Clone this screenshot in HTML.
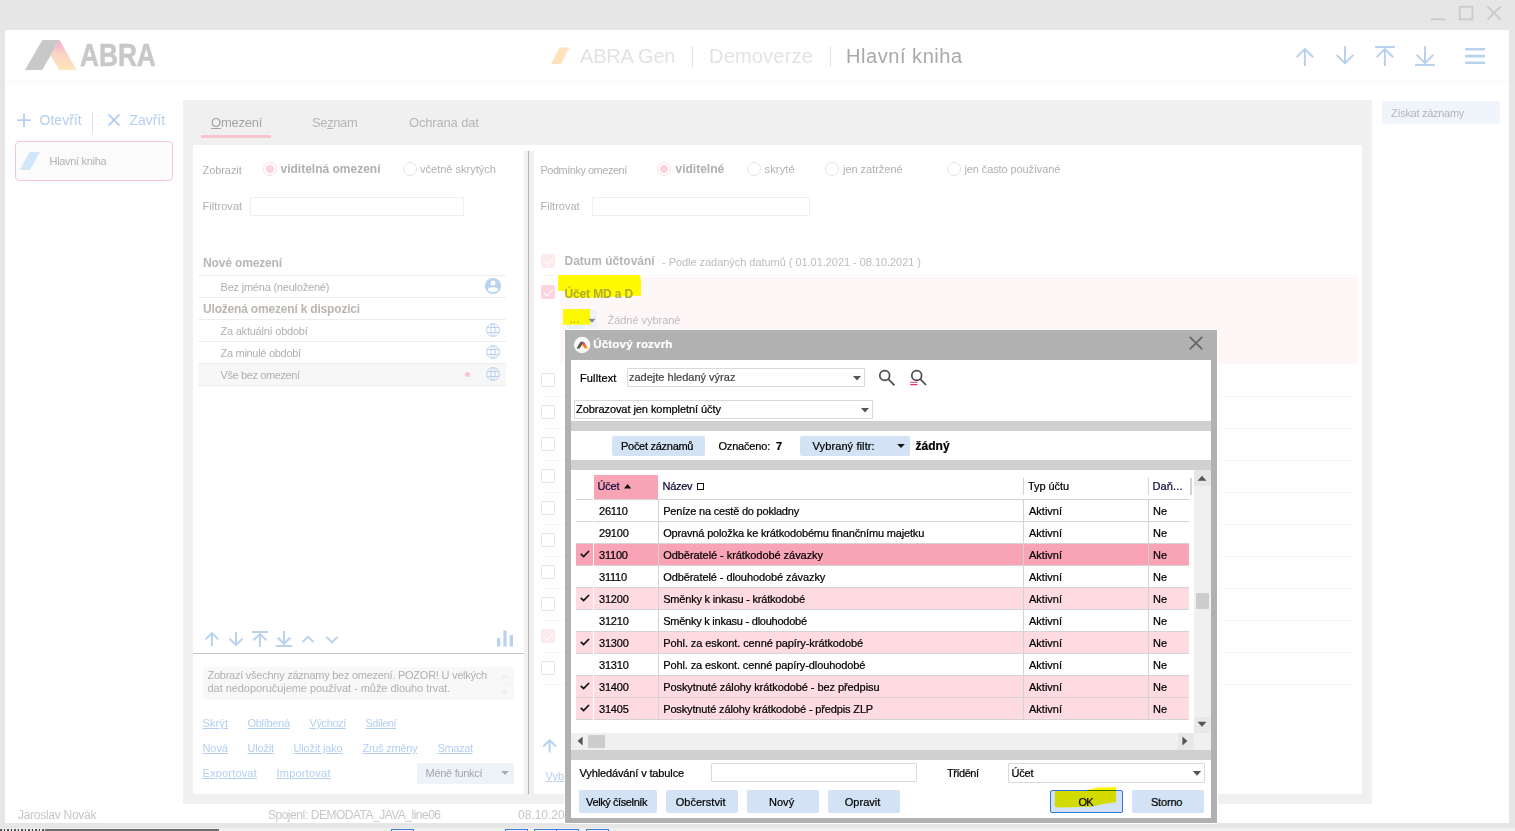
<!DOCTYPE html>
<html lang="cs">
<head>
<meta charset="utf-8">
<title>ABRA Gen - Hlavní kniha</title>
<style>
*{box-sizing:border-box;margin:0;padding:0}
html,body{width:1515px;height:831px;overflow:hidden}
body{background:#e6e6e6;font-family:"Liberation Sans",sans-serif;font-size:11px;color:#000;position:relative}
.abs,.abs *{position:absolute}
.t{position:absolute;white-space:nowrap;line-height:14px}
#win{position:absolute;left:5px;top:30px;width:1504px;height:793px;background:#fff}

.lk{color:#b3cff0;text-decoration:underline;font-size:11px}
.g{color:#b0b0b0}
.rad{position:absolute;width:14px;height:14px;border-radius:50%;border:1px solid #e4e4e4;background:#fff}
.rad.on{border-color:#fddde3;background:radial-gradient(circle,#fdd3db 0,#fdd3db 3.7px,#fff 4.5px)}
.cb{position:absolute;left:541px;width:14px;height:14px;border:1px solid #e6e6e6;border-radius:2px;background:#fff}
.cb.on{border:none;background:#fdeaed}
.cb.on2{border:none;background:#fcd4db}
.hl{position:absolute;height:1px;background:#ededed}
.rl{position:absolute;left:540px;width:816px;height:1px;background:#f6f6f6}

.cb.on::after,.cb.on2::after{content:"";position:absolute;left:4.5px;top:1.5px;width:4px;height:8px;border:solid #fff;border-width:0 1.6px 1.6px 0;transform:rotate(42deg)}
#dlg{position:absolute;left:565px;top:330px;width:652px;height:493px;background:#b1b1b1;box-shadow:0 0 0 1px rgba(255,255,255,0.85)}
#dlg .in{position:absolute;left:6px;top:30px;width:640px;height:458px;background:#fff}
.d{position:absolute;white-space:nowrap;line-height:14px;font-size:11px;color:#000}
.bar{position:absolute;left:571px;width:640px;background:#d0d0d0}
.btn{position:absolute;background:#d3e3f5;border-radius:2px;height:23px;top:790px;font-size:11px;line-height:24px;text-align:center;white-space:nowrap;padding-right:2.800px}
.inp{position:absolute;border:1px solid #d9d9d9;background:#fff;border-radius:1px}
.gr{position:absolute;left:576px;width:613px;height:22px}
.gr i{position:absolute;top:0;height:21px;font-style:normal;white-space:nowrap;line-height:23px;padding-left:5px;overflow:hidden}
.gr.m i{background:#fddbe0}
.gr.s i{background:#f8a4b4}
.gr .c0{left:0;width:17px}
.gr .c1{left:18px;width:64px;letter-spacing:-0.200px}
.gr .c2{left:83px;width:364px;padding-left:4.200px}
.gr .c3{left:448px;width:124px}
.gr .c4{left:573px;width:40px;padding-left:4px}
.gl{position:absolute;background:#d4d4d4}
.d,.gr,.btn{-webkit-text-stroke:0.22px currentColor}
</style>






<style id="fitcss">
#h1{letter-spacing:-0.177px !important}
#h2{letter-spacing:0.193px !important}
#h3{letter-spacing:0.553px !important}
#sb1{letter-spacing:0.041px !important}
#sb2{letter-spacing:-0.047px !important}
#sb3{letter-spacing:-0.304px !important}
#tb1{letter-spacing:-0.238px !important}
#tb2{letter-spacing:-0.384px !important}
#tb3{letter-spacing:-0.168px !important}
#l1{letter-spacing:-0.069px !important}
#l2{letter-spacing:-0.002px !important}
#l3{letter-spacing:0.013px !important}
#l4{letter-spacing:0.064px !important}
#l5{letter-spacing:-0.142px !important}
#l6{letter-spacing:-0.211px !important}
#l7{letter-spacing:-0.187px !important}
#l8{letter-spacing:-0.224px !important}
#d1{letter-spacing:-0.255px !important}
#k1{letter-spacing:0.107px !important}
#k2{letter-spacing:-0.307px !important}
#k3{letter-spacing:-0.392px !important}
#k4{letter-spacing:-0.55px !important}
#k5{letter-spacing:-0.072px !important}
#k6{letter-spacing:-0.186px !important}
#k7{letter-spacing:-0.15px !important}
#k8{letter-spacing:-0.257px !important}
#k9{letter-spacing:-0.366px !important}
#k10{letter-spacing:0.181px !important}
#k11{letter-spacing:0.223px !important}
#mf{letter-spacing:-0.284px !important}
#r1{letter-spacing:-0.497px !important}
#r2{letter-spacing:0.001px !important}
#r3{letter-spacing:0.159px !important}
#r4{letter-spacing:-0.028px !important}
#r5{letter-spacing:-0.108px !important}
#r7{letter-spacing:0.013px !important}
#r8{letter-spacing:-0.042px !important}
#r9{letter-spacing:-0.138px !important}
#r11{letter-spacing:-0.038px !important}
#st2{letter-spacing:-0.507px !important}
#zz{letter-spacing:-0.288px !important}
#l9{letter-spacing:-0.294px !important}
#l10{letter-spacing:-0.387px !important}
#d2{letter-spacing:-0.05px !important}
#dt{letter-spacing:0.209px !important}
#d_ft{letter-spacing:0.129px !important}
#d_ph{letter-spacing:-0.0px !important}
#d_zk{letter-spacing:-0.06px !important}
#d_pz{letter-spacing:-0.279px !important}
#d_oz{letter-spacing:-0.189px !important}
#d_vf{letter-spacing:0.112px !important}
#d_za{letter-spacing:0.037px !important}
#g_h1{letter-spacing:-0.206px !important}
#g_h2{letter-spacing:-0.298px !important}
#g_h3{letter-spacing:-0.072px !important}
#g_h4{letter-spacing:0.14px !important}
#d_vt{letter-spacing:-0.129px !important}
#d_tr{letter-spacing:-0.466px !important}
#d_uc{letter-spacing:-0.206px !important}
#b1{letter-spacing:-0.403px !important}
#b2{letter-spacing:0.038px !important}
#b3{letter-spacing:0.059px !important}
#b4{letter-spacing:0.019px !important}
#b5{letter-spacing:-0.953px !important}
#b6{letter-spacing:-0.17px !important}
#n0{letter-spacing:-0.202px !important}
#n1{letter-spacing:-0.161px !important}
#n2{letter-spacing:-0.052px !important}
#n3{letter-spacing:-0.077px !important}
#n4{letter-spacing:-0.199px !important}
#n5{letter-spacing:-0.241px !important}
#n6{letter-spacing:-0.08px !important}
#n7{letter-spacing:-0.1px !important}
#n8{letter-spacing:-0.075px !important}
#n9{letter-spacing:-0.142px !important}
#st1{letter-spacing:-0.274px !important}
</style>
</head>
<body>
<!-- window controls -->
<svg class="t" style="left:1425px;top:0;width:90px;height:30px" viewBox="0 0 90 30">
 <g stroke="#cbcbcb" stroke-width="1.9" fill="none">
  <path d="M6 19.2H20"/>
  <rect x="34.8" y="6.8" width="12.6" height="12.6"/>
  <path d="M62.5 6.5L75.5 19.5M75.5 6.5L62.5 19.5"/>
 </g>
</svg>
<div id="win"></div>
<!--HEADER-->
<svg class="t" style="left:20px;top:36px;width:60px;height:38px" viewBox="0 0 60 38">
 <defs><linearGradient id="lg1" x1="0" y1="0" x2="0" y2="1"><stop offset="0" stop-color="#f6a8d2"/><stop offset="0.45" stop-color="#fbd3c4"/><stop offset="1" stop-color="#ffe6b8"/></linearGradient></defs>
 <polygon points="5,34 22.3,4 39.5,4 22.2,34" fill="#c8c8c8"/>
 <polygon points="39.5,4 56.5,34 39.2,34 30.6,19.4" fill="url(#lg1)"/>
</svg>
<div class="t" style="left:79.5px;top:37.5px;font-size:30.5px;line-height:34px;font-weight:bold;color:#c8c8c8;-webkit-text-stroke:0.5px #c8c8c8;transform:scaleX(0.86);transform-origin:0 0">ABRA</div>
<svg class="t" style="left:548px;top:44px;width:26px;height:24px" viewBox="0 0 26 24">
 <polygon points="3,20 11.5,3.5 21.5,3.5 13,20" fill="#fde2bd"/>
</svg>
<div class="t" style="left:580px;top:44px;font-size:20px;line-height:24px;color:#e3e3e3" id="h1">ABRA Gen</div>
<div class="t" style="left:692px;top:46px;width:1px;height:21px;background:#e2e2e2"></div>
<div class="t" style="left:709px;top:44px;font-size:20px;line-height:24px;color:#e3e3e3" id="h2">Demoverze</div>
<div class="t" style="left:830px;top:46px;width:1px;height:21px;background:#e2e2e2"></div>
<div class="t" style="left:846px;top:44px;font-size:20px;line-height:24px;color:#a9a9a9" id="h3">Hlavní kniha</div>
<div class="t" style="left:5px;top:80px;width:1504px;height:8px;background:linear-gradient(#fafafa,#fdfdfd 40%,#fff)"></div>
<svg class="t" style="left:1290px;top:40px;width:210px;height:34px" viewBox="0 0 210 34">
 <g stroke="#b9d3ef" stroke-width="2" fill="none">
  <path d="M14.900 25.900V8.900M6.700 17.200L14.900 9L23.100 17.200"/>
  <path d="M55 6.200V23.300M46.600 14.900L55 23.300L63.400 14.900"/>
  <path d="M85.200 7H104.900M94.900 25.900V8.400M86.700 17.200L94.900 9L103.100 17.200"/>
  <path d="M125.100 25.100H144.900M135 6.200V23.600M126.600 14.700L135 23.100L143.400 14.700"/>
 </g>
 <g stroke="#b9d3ef" stroke-width="2.600" fill="none">
  <path d="M175.100 9.300H195M175.100 16.100H195M175.100 22.700H195"/>
 </g>
</svg>
<!--SIDEBAR-->
<svg class="t" style="left:14px;top:108px;width:110px;height:26px" viewBox="0 0 110 26">
 <g stroke="#b5d0ee" stroke-width="1.8" fill="none">
  <path d="M10 5.5V19M3.2 12.2H16.8"/>
  <path d="M94.5 6.5L105.5 17.5M105.5 6.5L94.5 17.5"/>
 </g>
 <path d="M78.5 4V25" stroke="#d5e3f4" stroke-width="1"/>
</svg>
<div class="t" id="sb1" style="left:39.5px;top:111px;font-size:14px;line-height:18px;color:#b5d0ee;letter-spacing:0.5px">Otevřít</div>
<div class="t" id="sb2" style="left:129.5px;top:111px;font-size:14px;line-height:18px;color:#b5d0ee;letter-spacing:0.5px">Zavřít</div>
<div class="t" style="left:15px;top:141px;width:158px;height:40px;border:1px solid #fac6d0;border-radius:4px;background:#fbfbfb"></div>
<svg class="t" style="left:18px;top:150px;width:24px;height:22px" viewBox="0 0 24 22">
 <polygon points="2,20 11.5,2 22,2 12,20" fill="#d2e6fa"/>
</svg>
<div class="t g" id="sb3" style="left:49.5px;top:154px;color:#b2b2b8">Hlavní kniha</div>
<div class="t" id="st1" style="left:18px;top:807px;font-size:12px;line-height:16px;color:#c6c6c6">Jaroslav Novák</div>
<div class="t" id="st2" style="left:268px;top:807px;font-size:12px;line-height:16px;color:#c6c6c6">Spojení: DEMODATA_JAVA_line06</div>
<div class="t" id="st3" style="left:518px;top:807px;font-size:12px;line-height:16px;color:#c6c6c6">08.10.2021</div>
<!--MAIN-->
<div class="t" style="left:183px;top:100px;width:1189px;height:704px;background:#f0f0f0"></div>
<div class="t" style="left:193px;top:145px;width:1169px;height:649px;background:#fff"></div>
<div class="t" style="left:524px;top:151px;width:10px;height:643px;background:#f0f0f0"></div>
<div class="t" style="left:528px;top:151px;width:1px;height:643px;background:#b4b4b4"></div>
<div class="t" style="left:1382px;top:101px;width:118px;height:23px;background:#f0f5fc;border-radius:2px"></div>
<div class="t g" id="zz" style="left:1391px;top:106px;color:#b8b4b4">Získat záznamy</div>
<!-- tabs -->
<div class="t" id="tb1" style="margin-top:1px;left:211px;top:114px;font-size:13px;line-height:16px;color:#a4a4a4"><u>O</u>mezení</div>
<div class="t" style="left:201px;top:135px;width:70px;height:3px;background:#fac5cf"></div>
<div class="t" id="tb2" style="margin-top:1px;left:312px;top:114px;font-size:13px;line-height:16px;color:#b6b6b6">Se<u>z</u>nam</div>
<div class="t" id="tb3" style="margin-top:1px;left:409px;top:114px;font-size:13px;line-height:16px;color:#b6b6b6">Ochrana dat</div>
<!-- left panel -->
<div class="t g" id="l1" style="left:202.5px;top:163px">Zobrazit</div>
<div class="rad on" style="left:263px;top:162px"></div>
<div class="t g" id="l2" style="left:280.5px;top:162px;font-weight:bold;font-size:12px">viditelná omezení</div>
<div class="rad" style="left:403px;top:162px"></div>
<div class="t g" id="l3" style="left:420px;top:162px;">včetně skrytých</div>
<div class="t g" id="l4" style="left:202.5px;top:199px">Filtrovat</div>
<div class="t" style="left:250px;top:197px;width:214px;height:19px;border:1px solid #efefef;background:#fff"></div>
<div class="t" id="l5" style="left:203px;top:256px;font-weight:bold;font-size:12px;color:#bab6b2">Nové omezení</div>
<div class="hl" style="left:198px;top:275px;width:308px"></div>
<div class="t g" id="l6" style="left:220.5px;top:280px">Bez jména (neuložené)</div>
<svg class="t" style="left:484px;top:277px;width:18px;height:18px" viewBox="0 0 18 18">
 <circle cx="9" cy="9" r="8.100" fill="#b9d3ef"/><circle cx="9" cy="5.900" r="2.500" fill="#fff"/><ellipse cx="9" cy="12.600" rx="5" ry="2.400" fill="#fff"/>
</svg>
<div class="hl" style="left:198px;top:297px;width:308px"></div>
<div class="t" id="l7" style="left:203px;top:302px;font-weight:bold;font-size:12px;color:#bab6b2">Uložená omezení k dispozici</div>
<div class="hl" style="left:198px;top:319px;width:308px"></div>
<div class="t g" id="l8" style="left:220.5px;top:324px">Za aktuální období</div>
<div class="hl" style="left:198px;top:341px;width:308px"></div>
<div class="t g" id="l9" style="left:220.5px;top:346px">Za minulé období</div>
<div class="hl" style="left:198px;top:363px;width:308px"></div>
<div class="t" style="left:198px;top:364px;width:308px;height:21px;background:#f7f7f7"></div>
<div class="t g" id="l10" style="left:220.5px;top:368px">Vše bez omezení</div>
<div class="t" style="left:465px;top:371.5px;width:5px;height:5px;border-radius:50%;background:#fbc3ce"></div>
<div class="hl" style="left:198px;top:385px;width:308px"></div>
<svg class="t" style="left:485px;top:322px;width:16px;height:16px" viewBox="0 0 16 16"><g stroke="#b9d3ef" stroke-width="1" fill="none"><circle cx="8" cy="8" r="6.400"/><ellipse cx="8" cy="8" rx="2.100" ry="6.400"/><path d="M2.200 5.500H13.800M2.200 10.500H13.800"/></g></svg>
<svg class="t" style="left:485px;top:344px;width:16px;height:16px" viewBox="0 0 16 16"><g stroke="#b9d3ef" stroke-width="1" fill="none"><circle cx="8" cy="8" r="6.400"/><ellipse cx="8" cy="8" rx="2.100" ry="6.400"/><path d="M2.200 5.500H13.800M2.200 10.500H13.800"/></g></svg>
<svg class="t" style="left:485px;top:366px;width:16px;height:16px" viewBox="0 0 16 16"><g stroke="#b9d3ef" stroke-width="1" fill="none"><circle cx="8" cy="8" r="6.400"/><ellipse cx="8" cy="8" rx="2.100" ry="6.400"/><path d="M2.200 5.500H13.800M2.200 10.500H13.800"/></g></svg>
<!-- arrows bottom-left -->
<svg class="t" style="left:200px;top:628px;width:320px;height:22px" viewBox="0 0 320 22">
 <g stroke="#b9d3ef" stroke-width="2" fill="none">
  <path d="M11.900 17.900V5.200M5.600 11.400L11.900 5.100L18.200 11.400"/>
  <path d="M36 4.100V17M29.600 10.700L36 17.100L42.400 10.700"/>
  <path d="M52 3.900H68M59.900 18.900V5.600M53.500 12.200L59.900 5.800L66.300 12.200"/>
  <path d="M76 18H92M84 3.100V16M77.700 9.500L84 15.800L90.300 9.500"/>
  <path d="M102.600 14L108 8.600L113.400 14"/>
  <path d="M126.600 9L132 14.400L137.400 9"/>
 </g>
 <g fill="#b9d3ef"><rect x="297" y="10" width="3.200" height="8.500"/><rect x="303.400" y="2.500" width="3.200" height="16"/><rect x="309.800" y="7" width="3.200" height="11.500"/></g>
</svg>
<div class="t" style="left:193px;top:653px;width:331px;height:1px;background:#c4c4c4"></div>
<div class="t" style="left:203px;top:667px;width:311px;height:33px;background:#f8f8f8;border-radius:2px"></div>
<div class="t g" id="d1" style="left:207.500px;top:669px;line-height:13px">Zobrazí všechny záznamy bez omezení. POZOR! U velkých</div>
<div class="t g" id="d2" style="left:207.500px;top:682px;line-height:13px">dat nedoporučujeme používat - může dlouho trvat.</div>
<svg class="t" style="left:497px;top:668px;width:16px;height:32px" viewBox="0 0 16 32"><g fill="#efefef"><polygon points="3,10.500 7.500,6 12,10.500"/><polygon points="3,22 7.500,26.500 12,22"/></g><path d="M0 16H16" stroke="#f3f3f3" stroke-width="1"/></svg>
<div class="t lk" id="k1" style="left:202.500px;top:716px">Skrýt</div>
<div class="t lk" id="k2" style="left:247.500px;top:716px">Oblíbená</div>
<div class="t lk" id="k3" style="left:309.500px;top:716px">Výchozí</div>
<div class="t lk" id="k4" style="left:365.500px;top:716px">Sdílení</div>
<div class="t lk" id="k5" style="left:202.500px;top:741px">Nová</div>
<div class="t lk" id="k6" style="left:247.500px;top:741px">Uložit</div>
<div class="t lk" id="k7" style="left:293.500px;top:741px">Uložit jako</div>
<div class="t lk" id="k8" style="left:362.500px;top:741px">Zruš změny</div>
<div class="t lk" id="k9" style="left:437.500px;top:741px">Smazat</div>
<div class="t lk" id="k10" style="left:202.500px;top:766px">Exportovat</div>
<div class="t lk" id="k11" style="left:276.500px;top:766px">Importovat</div>
<div class="t" style="left:417px;top:763px;width:97px;height:21px;background:#eef3fa;border-radius:2px"></div>
<div class="t" id="mf" style="left:425.500px;top:766px;color:#a6a6a6">Méně funkcí</div>
<svg class="t" style="left:500px;top:769px;width:10px;height:8px" viewBox="0 0 10 8"><polygon points="1.200,2 8.800,2 5,6" fill="#a8a8a8"/></svg>
<!-- right panel -->
<div class="t g" id="r1" style="left:540.500px;top:163px">Podmínky omezení</div>
<div class="rad on" style="left:657px;top:162px"></div>
<div class="t g" id="r2" style="left:675.500px;top:162px;font-weight:bold;font-size:12px">viditelné</div>
<div class="rad" style="left:747px;top:162px"></div>
<div class="t g" id="r3" style="left:764.500px;top:162px;">skryté</div>
<div class="rad" style="left:825px;top:162px"></div>
<div class="t g" id="r4" style="left:843px;top:162px;">jen zatržené</div>
<div class="rad" style="left:947px;top:162px"></div>
<div class="t g" id="r5" style="left:964.500px;top:162px;">jen často používané</div>
<div class="t g" id="r6" style="left:540.500px;top:199px">Filtrovat</div>
<div class="t" style="left:592px;top:197px;width:218px;height:19px;border:1px solid #efefef;background:#fff"></div>
<div class="cb on" style="top:254px"></div>
<div class="t" id="r7" style="left:564.500px;top:254px;font-weight:bold;font-size:12px;color:#b6b6b6">Datum účtování</div>
<div class="t g" id="r8" style="left:662px;top:254.500px;color:#bcbcbc">- Podle zadaných datumů ( 01.01.2021 - 08.10.2021 )</div>
<div class="rl" style="top:275px"></div>
<div class="t" style="left:560px;top:277px;width:798px;height:87px;background:#fdf7f8"></div>
<div class="cb on2" style="top:285px"></div>
<!-- yellow marker highlights -->
<div class="t" style="left:567px;top:310px;width:18px;height:18.500px;background:#e8f0fa;border-radius:2px"></div>
<div class="t" style="left:587px;top:310px;width:10px;height:18.500px;background:#edf3fb;border-radius:2px"></div>
<svg class="t" style="left:556px;top:272px;width:90px;height:58px" viewBox="0 0 90 58">
 <polygon points="2,3 83.900,3 85,8.300 85,23.800 75.600,23.800 57,24.700 31.800,25.700 9.600,25.700 9.600,18.900 2,18.900" fill="#fffa00"/>
 <polygon points="7,37.100 34,37.100 34,52.700 7,52.700" fill="#fdf900"/>
</svg>
<div class="t" id="r9" style="left:564.500px;top:286.500px;font-weight:bold;font-size:12px;color:#b0ac30">Účet MD a D</div>
<div class="t" id="r10" style="left:569.500px;top:311.500px;font-size:12px;color:#b4ae00">...</div>
<svg class="t" style="left:586.500px;top:316.500px;width:10px;height:8px" viewBox="0 0 10 8"><polygon points="1.500,1.800 8.500,1.800 5,6" fill="#8c8c8c"/></svg>
<div class="t g" id="r11" style="left:607.500px;top:312.500px;color:#bcbcbc">Žádné vybrané</div>
<div class="cb" style="top:373px"></div>
<div class="cb" style="top:405px"></div>
<div class="cb" style="top:437px"></div>
<div class="cb" style="top:469px"></div>
<div class="cb" style="top:501px"></div>
<div class="cb" style="top:533px"></div>
<div class="cb" style="top:565px"></div>
<div class="cb" style="top:597px"></div>
<div class="cb on" style="top:629px"></div>
<div class="cb" style="top:661px"></div>
<div class="rl" style="top:396px"></div>
<div class="rl" style="top:428px"></div>
<div class="rl" style="top:460px"></div>
<div class="rl" style="top:492px"></div>
<div class="rl" style="top:524px"></div>
<div class="rl" style="top:556px"></div>
<div class="rl" style="top:588px"></div>
<div class="rl" style="top:620px"></div>
<div class="rl" style="top:652px"></div>
<div class="rl" style="top:684px"></div>
<svg class="t" style="left:540px;top:736px;width:20px;height:20px" viewBox="0 0 20 20"><g stroke="#b9d3ef" stroke-width="2" fill="none"><path d="M9.600 16.500V4.300M3.300 10.500L9.600 4.200L15.900 10.500"/></g></svg>
<div class="t lk" id="k12" style="left:545.500px;top:769px">Vybrat</div>
<!--DIALOG-->
<div id="dlg"><div class="in"></div></div>
<svg class="t" style="left:573px;top:336px;width:18px;height:18px" viewBox="0 0 18 18">
 <defs><linearGradient id="lg2" x1="0" y1="0" x2="0" y2="1"><stop offset="0" stop-color="#e6007e"/><stop offset="0.35" stop-color="#f0503c"/><stop offset="1" stop-color="#f9a800"/></linearGradient></defs>
 <circle cx="9.100" cy="9" r="8.200" fill="#fafafa"/>
 <polygon points="3.400,12.500 7.500,5.700 10.900,5.700 6.800,12.500" fill="#5a5a5a"/>
 <polygon points="10.900,5.700 15,12.500 11.600,12.500 9.200,8.500" fill="url(#lg2)"/>
</svg>
<div class="d" id="dt" style="left:593.200px;top:335.500px;font-size:11.500px;line-height:16px;font-weight:bold;color:#fff">Účtový rozvrh</div>
<svg class="t" style="left:1187px;top:334px;width:18px;height:18px" viewBox="0 0 18 18"><path d="M2.700 2.800L15.300 15.400M15.300 2.800L2.700 15.400" stroke="#6a6a6a" stroke-width="1.900" fill="none"/></svg>
<div class="d" id="d_ft" style="left:580px;top:371px">Fulltext</div>
<div class="inp" style="left:627px;top:368px;width:238px;height:19px"></div>
<div class="d" id="d_ph" style="left:629px;top:370px;color:#444">zadejte hledaný výraz</div>
<svg class="t" style="left:852px;top:374px;width:10px;height:8px" viewBox="0 0 10 8"><polygon points="1,2 9,2 5,6.500" fill="#555"/></svg>
<svg class="t" style="left:876px;top:367px;width:22px;height:22px" viewBox="0 0 22 22"><g stroke="#4a4a4a" stroke-width="1.700" fill="none"><circle cx="8.700" cy="8.500" r="4.900"/><path d="M12.300 12.200L18.500 18.300"/></g></svg>
<svg class="t" style="left:907px;top:367px;width:22px;height:22px" viewBox="0 0 22 22"><g stroke="#4a4a4a" stroke-width="1.700" fill="none"><circle cx="9.700" cy="8.500" r="4.900"/><path d="M13.300 12.200L19 18"/></g><path d="M3.200 15.200H10.500M3.200 17.600H10.500" stroke="#e8336d" stroke-width="1.100"/></svg>
<div class="inp" style="left:574px;top:400px;width:299px;height:19px"></div>
<div class="d" id="d_zk" style="left:576px;top:402px">Zobrazovat jen kompletní účty</div>
<svg class="t" style="left:860px;top:406px;width:10px;height:8px" viewBox="0 0 10 8"><polygon points="1,2 9,2 5,6.500" fill="#555"/></svg>
<div class="bar" style="top:421px;height:10px"></div>
<div class="btn" style="left:612px;top:436px;width:93px;height:20px;line-height:20px;font-size:11px" ><span id="d_pz">Počet záznamů</span></div>
<div class="d" id="d_oz" style="left:718.500px;top:439px">Označeno:</div>
<div class="d" style="left:776px;top:439px;font-weight:bold">7</div>
<div class="btn" style="left:800px;top:436px;width:110px;height:20px;line-height:20px;font-size:11px;text-align:left;padding-left:12.500px"><span id="d_vf">Vybraný filtr:</span></div>
<svg class="t" style="left:896px;top:442px;width:10px;height:8px" viewBox="0 0 10 8"><polygon points="1.200,2 8.800,2 5,6" fill="#111"/></svg>
<div class="d" id="d_za" style="left:915.500px;top:439px;font-weight:bold;font-size:12px">žádný</div>
<div class="bar" style="top:460px;height:10px"></div>
<!-- grid -->
<div class="d" style="left:594px;top:475px;width:64px;height:24px;background:#f8a4b4"></div>
<div class="d" id="g_h1" style="left:597.500px;top:479px;color:#0a0a3c">Účet</div>
<svg class="t" style="left:623px;top:482px;width:10px;height:8px" viewBox="0 0 10 8"><polygon points="1,6.600 8.200,6.600 4.600,2" fill="#111"/></svg>
<div class="d" id="g_h2" style="left:662.500px;top:479px;color:#0a0a3c">Název</div>
<div class="d" style="left:697px;top:483px;width:7px;height:7px;border:1px solid #111"></div>
<div class="d" id="g_h3" style="left:1028px;top:479px">Typ účtu</div>
<div class="d" id="g_h4" style="left:1152.500px;top:479px;color:#0a0a3c">Daň...</div>
<div class="gl" style="left:1023px;top:478px;width:1px;height:17px"></div>
<div class="gl" style="left:1148px;top:478px;width:1px;height:17px"></div>
<div class="gl" style="left:1190px;top:478px;width:2px;height:17px"></div>
<div class="gl" style="left:576px;top:499px;width:613px;height:221px"></div>
<div class="d" style="left:593px;top:499px;width:1px;height:221px;background:#fff"></div>
<div class="gr " style="top:500px"><i class="c0" style="background:#fff"></i><i class="c1" style="background:#fff">26110</i><i class="c2" style="background:#fff"><span id="n0">Peníze na cestě do pokladny</span></i><i class="c3" style="background:#fff">Aktivní</i><i class="c4" style="background:#fff">Ne</i></div>
<div class="gr " style="top:522px"><i class="c0" style="background:#fff"></i><i class="c1" style="background:#fff">29100</i><i class="c2" style="background:#fff"><span id="n1">Opravná položka ke krátkodobému finančnímu majetku</span></i><i class="c3" style="background:#fff">Aktivní</i><i class="c4" style="background:#fff">Ne</i></div>
<div class="gr s" style="top:544px"><i class="c0"><svg style="position:absolute;left:3px;top:5px;width:12px;height:10px" viewBox="0 0 12 10"><path d="M1.800 4.800L4.600 7.600L10 2" stroke="#111" stroke-width="1.700" fill="none"/></svg></i><i class="c1">31100</i><i class="c2"><span id="n2">Odběratelé - krátkodobé závazky</span></i><i class="c3">Aktivní</i><i class="c4">Ne</i></div>
<div class="gr " style="top:566px"><i class="c0" style="background:#fff"></i><i class="c1" style="background:#fff">31110</i><i class="c2" style="background:#fff"><span id="n3">Odběratelé - dlouhodobé závazky</span></i><i class="c3" style="background:#fff">Aktivní</i><i class="c4" style="background:#fff">Ne</i></div>
<div class="gr m" style="top:588px"><i class="c0"><svg style="position:absolute;left:3px;top:5px;width:12px;height:10px" viewBox="0 0 12 10"><path d="M1.800 4.800L4.600 7.600L10 2" stroke="#111" stroke-width="1.700" fill="none"/></svg></i><i class="c1">31200</i><i class="c2"><span id="n4">Směnky k inkasu - krátkodobé</span></i><i class="c3">Aktivní</i><i class="c4">Ne</i></div>
<div class="gr " style="top:610px"><i class="c0" style="background:#fff"></i><i class="c1" style="background:#fff">31210</i><i class="c2" style="background:#fff"><span id="n5">Směnky k inkasu - dlouhodobé</span></i><i class="c3" style="background:#fff">Aktivní</i><i class="c4" style="background:#fff">Ne</i></div>
<div class="gr m" style="top:632px"><i class="c0"><svg style="position:absolute;left:3px;top:5px;width:12px;height:10px" viewBox="0 0 12 10"><path d="M1.800 4.800L4.600 7.600L10 2" stroke="#111" stroke-width="1.700" fill="none"/></svg></i><i class="c1">31300</i><i class="c2"><span id="n6">Pohl. za eskont. cenné papíry-krátkodobé</span></i><i class="c3">Aktivní</i><i class="c4">Ne</i></div>
<div class="gr " style="top:654px"><i class="c0" style="background:#fff"></i><i class="c1" style="background:#fff">31310</i><i class="c2" style="background:#fff"><span id="n7">Pohl. za eskont. cenné papíry-dlouhodobé</span></i><i class="c3" style="background:#fff">Aktivní</i><i class="c4" style="background:#fff">Ne</i></div>
<div class="gr m" style="top:676px"><i class="c0"><svg style="position:absolute;left:3px;top:5px;width:12px;height:10px" viewBox="0 0 12 10"><path d="M1.800 4.800L4.600 7.600L10 2" stroke="#111" stroke-width="1.700" fill="none"/></svg></i><i class="c1">31400</i><i class="c2"><span id="n8">Poskytnuté zálohy krátkodobé - bez předpisu</span></i><i class="c3">Aktivní</i><i class="c4">Ne</i></div>
<div class="gr m" style="top:698px"><i class="c0"><svg style="position:absolute;left:3px;top:5px;width:12px;height:10px" viewBox="0 0 12 10"><path d="M1.800 4.800L4.600 7.600L10 2" stroke="#111" stroke-width="1.700" fill="none"/></svg></i><i class="c1">31405</i><i class="c2"><span id="n9">Poskytnuté zálohy krátkodobé - předpis ZLP</span></i><i class="c3">Aktivní</i><i class="c4">Ne</i></div>
<!-- scrollbars -->
<div class="d" style="left:1194px;top:470px;width:17px;height:263px;background:#f0f0f0"></div>
<div class="d" style="left:1194px;top:470px;width:17px;height:16px;background:#e6e6e6"></div>
<div class="d" style="left:1194px;top:717px;width:17px;height:16px;background:#e8e8e8"></div>
<svg class="t" style="left:1197px;top:474px;width:10px;height:8px" viewBox="0 0 10 8"><polygon points="0.500,6.800 9.500,6.800 5,1.800" fill="#555"/></svg>
<svg class="t" style="left:1197px;top:720px;width:10px;height:8px" viewBox="0 0 10 8"><polygon points="0.500,1.800 9.500,1.800 5,6.800" fill="#555"/></svg>
<div class="d" style="left:1196px;top:593px;width:13px;height:16px;background:#cdcdcd;border-radius:1px"></div>
<div class="d" style="left:571px;top:733px;width:623px;height:17px;background:#f0f0f0"></div>
<div class="d" style="left:1194px;top:733px;width:17px;height:17px;background:#f0f0f0"></div>
<div class="d" style="left:1178px;top:733px;width:16px;height:17px;background:#e8e8e8"></div>
<svg class="t" style="left:576px;top:736px;width:8px;height:10px" viewBox="0 0 8 10"><polygon points="6.600,0.500 6.600,9.500 1.600,5" fill="#555"/></svg>
<svg class="t" style="left:1181px;top:736px;width:8px;height:10px" viewBox="0 0 8 10"><polygon points="1.400,0.500 1.400,9.500 6.400,5" fill="#555"/></svg>
<div class="d" style="left:588px;top:735px;width:17px;height:13px;background:#cdcdcd;border-radius:1px"></div>
<div class="bar" style="top:750px;height:9.500px"></div>
<div class="d" id="d_vt" style="left:579.500px;top:766px">Vyhledávání v tabulce</div>
<div class="inp" style="left:711px;top:763px;width:206px;height:19px"></div>
<div class="d" id="d_tr" style="left:947px;top:766px">Třídění</div>
<div class="inp" style="left:1008px;top:763px;width:197px;height:20px"></div>
<div class="d" id="d_uc" style="left:1011.500px;top:766px">Účet</div>
<svg class="t" style="left:1191.500px;top:769px;width:10px;height:8px" viewBox="0 0 10 8"><polygon points="0.800,2 9.200,2 5,6.800" fill="#555"/></svg>
<div class="btn" style="left:579px;width:78px"><span id="b1">Velký číselník</span></div>
<div class="btn" style="left:666px;width:72px"><span id="b2">Občerstvit</span></div>
<div class="btn" style="left:747px;width:72px"><span id="b3">Nový</span></div>
<div class="btn" style="left:828px;width:72px"><span id="b4">Opravit</span></div>
<div class="btn" style="left:1050px;width:73px;border:1px solid #2f74d8;line-height:22px;padding-right:1.800px"><span id="b5">OK</span></div>
<svg class="t" style="left:1050px;top:784px;width:72px;height:28px;mix-blend-mode:multiply" viewBox="0 0 72 28"><polygon points="4.900,6.900 35.700,6.900 39.900,5.300 47,3.700 66,3.100 66,18 50.600,20.400 41.100,22.700 9,23.600 4.900,22.700" fill="#fff500"/></svg>
<div class="btn" style="left:1132px;width:72px"><span id="b6">Storno</span></div>
<!-- bottom strip -->
<div class="t" style="left:0;top:828px;width:1515px;height:3px;background:#f0f0f0"></div>
<div class="t" style="left:45px;top:829px;width:174px;height:3px;background:#6e6e6e"></div>
<div class="t" style="left:0;top:829px;width:45px;height:3px;background:repeating-linear-gradient(90deg,#555 0,#555 2px,#ddd 2px,#ddd 4px,#333 4px,#333 5px,#eee 5px,#eee 7px)"></div>
<div class="t" style="left:391px;top:829px;width:23px;height:3px;border:1px solid #3a7bd5;border-bottom:none;background:#f4f4f4"></div>
<div class="t" style="left:505px;top:829px;width:23px;height:3px;border:1px solid #3a7bd5;border-bottom:none;background:#f4f4f4"></div>
<div class="t" style="left:534px;top:829px;width:23px;height:3px;border:1px solid #3a7bd5;border-bottom:none;background:#f4f4f4"></div>
<div class="t" style="left:556px;top:829px;width:23px;height:3px;border:1px solid #3a7bd5;border-bottom:none;background:#f4f4f4"></div>
<div class="t" style="left:586px;top:829px;width:23px;height:3px;border:1px solid #3a7bd5;border-bottom:none;background:#f4f4f4"></div>
</body>
</html>
